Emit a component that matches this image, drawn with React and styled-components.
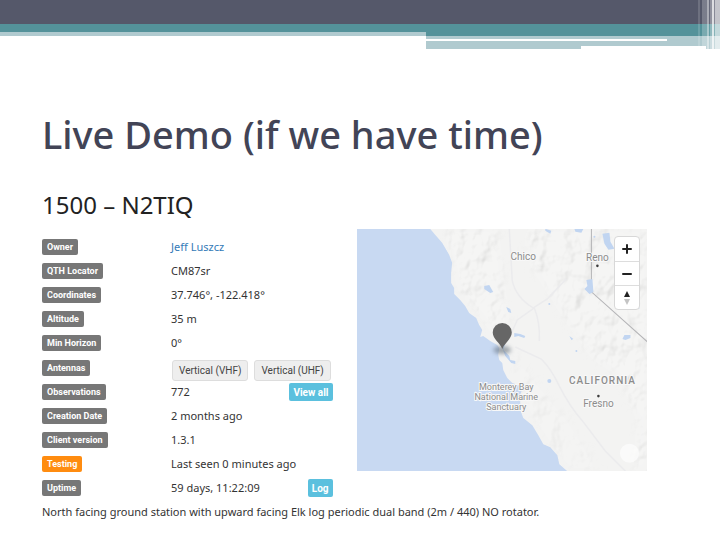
import React from 'react';
import styled, { createGlobalStyle } from 'styled-components';

const stationFields = [
  { label: 'Owner', value: <OwnerName /> },
  { label: 'QTH Locator', value: 'CM87sr' },
  { label: 'Coordinates', value: '37.746°, -122.418°' },
  { label: 'Altitude', value: '35 m' },
  { label: 'Min Horizon', value: '0°' },
  { label: 'Antennas', antennas: ['Vertical (VHF)', 'Vertical (UHF)'] },
  { label: 'Observations', value: '772', action: 'View all' },
  { label: 'Creation Date', value: '2 months ago' },
  { label: 'Client version', value: '1.3.1' },
  { label: 'Testing', value: 'Last seen 0 minutes ago', testing: true },
  { label: 'Uptime', value: '59 days, 11:22:09', action: 'Log' },
];

function OwnerName() {
  return <OwnerLink href="#owner">Jeff Luszcz</OwnerLink>;
}

const SlideHeader = () => (
  <Header>
    <DarkBar />
    <Bands>
      <LeftBands>
        <Band $height={8} $color="#54929a" />
        <Band $height={4} $color="#b0cacf" />
      </LeftBands>
      <RightBands>
        <Band $height={12} $color="#54929a" />
        <Band $height={3} $color="#b0cacf" />
        <SplitBand>
          <Segment $grow={241} $height={2} $color="#ffffff" />
          <Segment $grow={53} $height={2} $color="#b0cacf" />
        </SplitBand>
        <Band $height={5} $color="#b0cacf" />
        <SplitBand>
          <Segment $grow={155} $height={3} $color="#b0cacf" />
          <Segment $grow={125} $height={3} $color="#ffffff" />
          <Segment $grow={14} $height={3} $color="#b0cacf" />
        </SplitBand>
      </RightBands>
    </Bands>
    <Stripes />
  </Header>
);

const StationMap = () => (
  <MapFrame>
    <svg viewBox="0 0 290 242" preserveAspectRatio="xMidYMid slice" role="img" aria-label="Station map">
      <defs>
        <filter id="relief" x="0" y="0" width="100%" height="100%">
          <feTurbulence type="fractalNoise" baseFrequency="0.06 0.05" numOctaves="3" seed="8" result="noise" />
          <feDiffuseLighting in="noise" lightingColor="#ffffff" surfaceScale="5" diffuseConstant="1.2">
            <feDistantLight azimuth="225" elevation="55" />
          </feDiffuseLighting>
          <feColorMatrix type="saturate" values="0" />
        </filter>
        <filter id="soft" x="-30%" y="-30%" width="160%" height="160%">
          <feGaussianBlur stdDeviation="5" />
        </filter>
        <filter id="shadow" x="-50%" y="-50%" width="200%" height="200%">
          <feGaussianBlur stdDeviation="2" />
        </filter>
        <clipPath id="land">
          <path d={coast} />
        </clipPath>
        <mask id="hills">
          <g fill="#ffffff" filter="url(#soft)">
            <path d="M88 0L140 0L147 60L152 100L138 108L122 84L102 62Z" />
            <path d="M170 0H290V200L280 190L262 146L236 130L212 96L190 62L168 26Z" />
            <path d="M282 180H290V242H276Z" />
            <path d="M158 122L180 152L212 190L244 242H212L186 208L168 180L160 156Z" opacity="0.5" />
          </g>
        </mask>
      </defs>
      <rect width="290" height="242" fill="#c8d9f2" />
      <path d={coast} fill="#f3f3f2" />
      <g clipPath="url(#land)">
        <g mask="url(#hills)">
          <rect width="290" height="242" filter="url(#relief)" opacity="0.2" />
        </g>
      </g>
      <g fill="none" stroke="#ebebed" strokeWidth="1.5">
        <path d="M152 0L155 52Q159 69 176 79L190 70L209 50" />
        <path d="M177 79Q183 94 182 112M177 79L160 91L152 109" />
        <path d="M158 118L184 130Q194 140 202 157Q212 177 226 193L248 222L268 242" />
      </g>
      <path d="M234 0V63L290 113" fill="none" stroke="#b4b4b7" strokeWidth="1" />
      <g fill="#c1d5f1">
        <path d="M141 112L147 109L148 115L146 121L152 127L153 131L158 132L158 135L154 134L148 127L145 119Z" />
        <path d="M229 51L235 50L236 63L232 65L227 60L230 57Z" />
        <path d="M245 5L252 4L253 13L257 20L251 21L247 15Z" />
        <path d="M188 0L194 2L193 5L188 2ZM217 0H226L224 4L218 3Z" />
        <path d="M127 57L132 56L136 63L133 64L127 60Z" />
        <path d="M149 78L153 80L154 84L151 83ZM157 104L163 105L168 107L167 109L161 107L157 108Z" />
        <path d="M267 106L273 106L273 109L268 111L265 110ZM212 107L216 110L214 111Z" />
      </g>
      <g fill="#c1d5f1">
        <circle cx="237" cy="8" r="1" />
        <circle cx="192" cy="75" r="1" />
        <circle cx="219" cy="122" r="1" />
        <circle cx="192" cy="152" r="2" />
        <circle cx="281" cy="79" r="1" />
      </g>
      <g fill="#3c3c3c">
        <circle cx="240" cy="37" r="1.3" />
        <circle cx="241" cy="167" r="1.3" />
      </g>
      <PlaceLabels>
        <text x="166" y="31">Chico</text>
        <text x="240" y="32">Reno</text>
        <text x="241" y="178">Fresno</text>
        <StateLabel x="245" y="155">CALIFORNIA</StateLabel>
        <SanctuaryLabel>
          <tspan x="149" y="161">Monterey Bay</tspan>
          <tspan x="149" y="171">National Marine</tspan>
          <tspan x="149" y="181">Sanctuary</tspan>
        </SanctuaryLabel>
      </PlaceLabels>
      <ellipse cx="145" cy="121" rx="9" ry="4" fill="#65717d" opacity="0.6" filter="url(#shadow)" />
      <path d="M145 120C143 114 135.500 110 135.500 103.500A9.500 9.500 0 0 1 154.500 103.500C154.500 110 147 114 145 120Z" fill="#666666" />
      <circle cx="272" cy="224" r="9.500" fill="#ffffff" opacity="0.6" />
    </svg>
    <MapControls>
      <MapButton type="button" aria-label="Zoom in">
        <svg width="10" height="10" viewBox="0 0 10 10">
          <path d="M5 1V9M1 5H9" stroke="#222222" strokeWidth="2" strokeLinecap="round" />
        </svg>
      </MapButton>
      <MapButton type="button" aria-label="Zoom out">
        <svg width="10" height="10" viewBox="0 0 10 10">
          <path d="M1 5H9" stroke="#222222" strokeWidth="2" strokeLinecap="round" />
        </svg>
      </MapButton>
      <MapButton type="button" aria-label="Reset north">
        <svg width="8" height="14" viewBox="0 0 8 14">
          <path d="M4 0L7 6H1Z" fill="#222222" />
          <path d="M4 14L1 8H7Z" fill="#c4c4c4" />
        </svg>
      </MapButton>
    </MapControls>
  </MapFrame>
);

const App = () => {
  return (
    <>
      <GlobalStyle />
      <SlideHeader />
      <Content>
        <Title>Live Demo (if we have time)</Title>
        <StationName>1500 – N2TIQ</StationName>
        <Station>
          <Fields>
            {stationFields.map((field) => (
              <Row key={field.label} $tall={Boolean(field.antennas)}>
                <Term>
                  <Badge $testing={field.testing}>{field.label}</Badge>
                </Term>
                <Value>
                  {field.value && <ValueText>{field.value}</ValueText>}
                  {field.antennas && (
                    <Antennas>
                      {field.antennas.map((name) => (
                        <AntennaButton key={name} type="button">{name}</AntennaButton>
                      ))}
                    </Antennas>
                  )}
                  {field.action && <ActionButton type="button">{field.action}</ActionButton>}
                </Value>
              </Row>
            ))}
          </Fields>
          <StationMap />
        </Station>
        <Description>
          North facing ground station with upward facing Elk log periodic dual band (2m / 440) NO rotator.
        </Description>
      </Content>
    </>
  );
};

// Outline of the land east of the Pacific coast
const coast =
  'M73 0L78 6L85 14L92 26L95 34L94 44L94 54L97 59L97 65L103 71L108 77L112 84L119 89L122 96L125 101L123 108L126 107' +
  'L133 112L140 116L142 119L141 126L142 131L145 134L146 141L150 149L155 154L161 156L165 160L163 166L163 181L166 189' +
  'L175 196L181 206L186 215L193 218L200 226L202 235L210 242H290V0Z';

// Styled components
const GlobalStyle = createGlobalStyle`
  * {
    box-sizing: border-box;
  }

  body {
    margin: 0;
    background-color: #ffffff;
    color: #333333;
    font-family: 'Noto Sans', sans-serif;
    font-size: 11px;
  }

  button {
    font-family: inherit;
    cursor: pointer;
  }
`;

const Header = styled.header`
  position: relative;
  height: 49px;
`;

const DarkBar = styled.div`
  height: 24px;
  background-color: #55586a;
`;

const Bands = styled.div`
  display: flex;
  align-items: flex-start;
`;

const LeftBands = styled.div`
  flex: 426 1 0;
`;

const RightBands = styled.div`
  flex: 294 1 0;
`;

const Band = styled.div`
  height: ${(props) => props.$height}px;
  background-color: ${(props) => props.$color};
`;

const SplitBand = styled.div`
  display: flex;
`;

const Segment = styled(Band)`
  flex: ${(props) => props.$grow} 1 0;
`;

/* Translucent vertical stripes over the right end of the bars */
const Stripes = styled.div`
  position: absolute;
  top: 0;
  right: 0;
  width: 22px;
  height: 49px;
  background: linear-gradient(
    to right,
    rgba(255, 255, 255, 0.15) 0 2px,
    transparent 2px 4px,
    rgba(255, 255, 255, 0.22) 4px 9px,
    rgba(255, 255, 255, 0.5) 9px 11px,
    rgba(255, 255, 255, 0.1) 11px 12px,
    rgba(255, 255, 255, 0.35) 12px 14px,
    rgba(255, 255, 255, 0.8) 14px 16px,
    rgba(255, 255, 255, 0.3) 16px 17px,
    rgba(255, 255, 255, 0.65) 17px 22px
  );
`;

const Content = styled.main`
  padding: 56px 73px 16px 42px;
`;

const Title = styled.h1`
  margin: 0;
  color: #424456;
  font-size: 38px;
  font-weight: 500;
  line-height: 58px;
`;

const StationName = styled.h2`
  margin: 28px 0 0;
  color: #222222;
  font-size: 24px;
  font-weight: 400;
  line-height: 28px;
`;

const Station = styled.section`
  display: flex;
  gap: 24px;
  margin-top: 10px;
`;

const Fields = styled.dl`
  flex: 1;
  margin: 0;
  padding-top: 6px;
`;

const Row = styled.div`
  display: flex;
  align-items: center;
  height: ${(props) => (props.$tall ? 25 : 24)}px;
`;

const Term = styled.dt`
  display: flex;
  width: 129px;
`;

const Badge = styled.span`
  padding: 0 5px;
  border-radius: 2px;
  background-color: ${(props) => (props.$testing ? '#ff8c10' : '#777777')};
  color: #ffffff;
  font-family: Roboto, sans-serif;
  font-size: 9px;
  font-weight: 700;
  line-height: 16px;
`;

const Value = styled.dd`
  display: flex;
  flex: 1;
  align-items: center;
  justify-content: space-between;
  margin: 0;
  white-space: nowrap;
`;

const ValueText = styled.span`
  padding-bottom: 2px;
`;

const OwnerLink = styled.a`
  color: #337ab7;
  text-decoration: none;
`;

const Antennas = styled.div`
  display: flex;
  gap: 6px;
  padding: 6px 0 0 1px;
`;

const AntennaButton = styled.button`
  height: 21px;
  padding: 0 6px;
  border: 1px solid #dddddd;
  border-radius: 3px;
  background-color: #eeeeee;
  color: #444444;
  font-family: Roboto, sans-serif;
  font-size: 10px;
`;

const ActionButton = styled.button`
  height: 18px;
  padding: 0 4px;
  border: 0;
  border-radius: 2px;
  background-color: #5bc0de;
  color: #ffffff;
  font-family: Roboto, sans-serif;
  font-size: 10px;
  font-weight: 700;
`;

const MapFrame = styled.div`
  position: relative;
  flex: 1;
  height: 242px;

  > svg {
    display: block;
    width: 100%;
    height: 100%;
  }
`;

const PlaceLabels = styled.g`
  fill: #8c8c8c;
  stroke: #f8f8f8;
  stroke-width: 2px;
  paint-order: stroke;
  font-family: Roboto, sans-serif;
  font-size: 10px;
  text-anchor: middle;
`;

const StateLabel = styled.text`
  font-weight: 500;
  letter-spacing: 1px;
`;

const SanctuaryLabel = styled.text`
  font-size: 9px;
`;

const MapControls = styled.div`
  position: absolute;
  top: 7px;
  right: 7px;
  width: 26px;
  border: 1px solid #d8d8d8;
  border-radius: 4px;
  background-color: #ffffff;
  overflow: hidden;
`;

const MapButton = styled.button`
  display: flex;
  align-items: center;
  justify-content: center;
  width: 100%;
  height: 24px;
  padding: 0;
  border: 0;
  background-color: transparent;

  & + & {
    border-top: 1px solid #dddddd;
  }
`;

const Description = styled.p`
  margin: 4px 0 0;
  line-height: 16px;
`;

export default App;
